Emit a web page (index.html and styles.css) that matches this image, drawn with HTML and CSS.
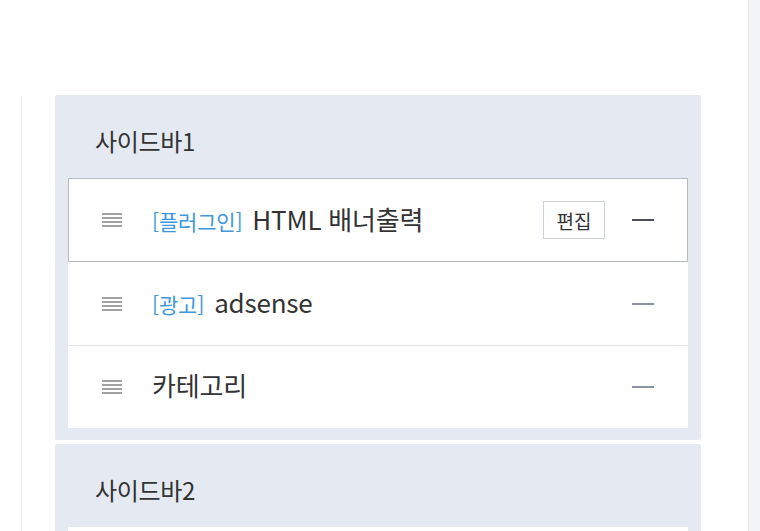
FILE: index.html
```html
<!DOCTYPE html>
<html lang="ko">
<head>
    <meta charset="utf-8">
    <title>사이드바 설정</title>
    <link rel="stylesheet" href="styles.css">
</head>
<body>
<div class="page">
    <div class="main">
        <div class="content">
            <div class="sidebar-box">
                <h2 class="box-title">사이드바1</h2>
                <ul class="module-list">
                    <li class="module active">
                        <span class="grip"><i></i><i></i><i></i><i></i></span>
                        <span class="name"><em>[플러그인]</em> HTML 배너출력</span>
                        <button class="btn-edit">편집</button>
                        <span class="remove"></span>
                    </li>
                    <li class="module">
                        <span class="grip"><i></i><i></i><i></i><i></i></span>
                        <span class="name"><em>[광고]</em> adsense</span>
                        <span class="remove"></span>
                    </li>
                    <li class="module">
                        <span class="grip"><i></i><i></i><i></i><i></i></span>
                        <span class="name">카테고리</span>
                        <span class="remove"></span>
                    </li>
                </ul>
            </div>
            <div class="sidebar-box">
                <h2 class="box-title">사이드바2</h2>
                <ul class="module-list empty"></ul>
            </div>
        </div>
    </div>
    <div class="side"></div>
</div>
</body>
</html>
```

FILE: styles.css
```css
* { margin: 0; padding: 0; box-sizing: border-box; }
html, body { width: 100%; height: 100%; overflow: hidden; }
body { background: #fff; font-family: "Noto Sans CJK KR", "Noto Sans", sans-serif; color: #333; }

.page { display: flex; height: 100%; }
.main { width: 748px; padding: 95px 0 0 21px; }
.content { border-left: 1px solid #eef0f3; padding-left: 33px; height: 100%; }
.side { flex: 1; border-left: 1px solid #e4e6ea; background: #f3f4f6; }

.sidebar-box { width: 646px; background: #e5e9f1; border-radius: 2px; padding: 0 13px 12px; margin-bottom: 4px; }
.box-title { font-size: 24px; font-weight: 400; color: #333; line-height: 32px; padding: 30px 0 21px 27px; letter-spacing: -0.3px; }

.module-list { list-style: none; background: #fff; }
.module-list.empty { height: 84px; }
.module { display: flex; align-items: center; height: 83px; border: 1px solid #fff; border-top: 1px solid #e1e5ec; padding: 0 33px 0 33px; }
.module:first-child { border-top-color: #fff; }
.module.active { border: 1px solid #b6bac4; height: 84px; }
.module.active + .module { border-top-color: #fff; }

.grip { display: flex; flex-direction: column; gap: 2px; width: 20px; margin-right: 30px; }
.grip i { display: block; height: 2px; background: #a2a2a2; }

.name { flex: 1; font-size: 26px; color: #333; letter-spacing: -0.2px; padding-bottom: 4px; }
.name em { font-style: normal; font-size: 21px; color: #3f97dd; margin-right: 3px; }

.btn-edit { width: 62px; height: 38px; background: #fff; border: 1px solid #cdd2da; font-family: inherit; font-size: 19px; color: #333; margin-right: 27px; }
.remove { width: 22px; height: 2px; background: #8b93a3; }
.module.active .remove { background: #4a4f58; }
```
